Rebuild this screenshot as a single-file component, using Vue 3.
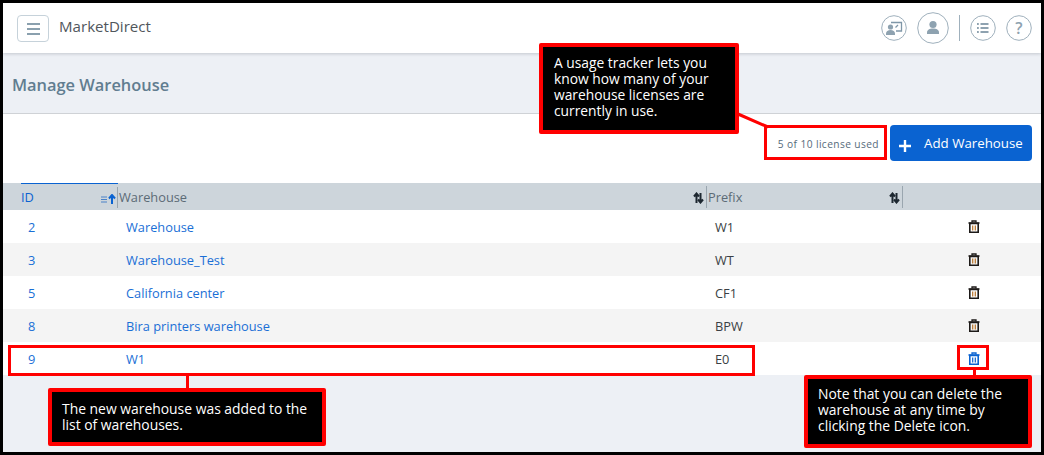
<script setup>
const rows = [
  { id: 2, name: 'Warehouse', prefix: 'W1' },
  { id: 3, name: 'Warehouse_Test', prefix: 'WT' },
  { id: 5, name: 'California center', prefix: 'CF1' },
  { id: 8, name: 'Bira printers warehouse', prefix: 'BPW' },
  { id: 9, name: 'W1', prefix: 'E0', active: true },
]
</script>

<template>
  <div class="page">
    <header class="topbar">
      <button class="menu" aria-label="Menu"><span></span><span></span><span></span></button>
      <div class="brand">MarketDirect</div>
      <div class="tools">
        <svg class="ic" width="26" height="26" viewBox="0 0 26 26">
          <circle cx="13" cy="13" r="12.300" fill="#fff" stroke="#9fb0bc" />
          <path d="M10 7.500h10.500v8.500H15" fill="none" stroke="#7f97a8" stroke-width="1.300" />
          <path d="M14.500 12.500l2.500-2.500" fill="none" stroke="#7f97a8" stroke-width="1.300" />
          <circle cx="9.500" cy="12" r="2.600" fill="#8ea2b0" />
          <path d="M5 20v-1.500c0-2.200 2-3.500 4.500-3.500s4.500 1.300 4.500 3.500V20z" fill="#8ea2b0" />
        </svg>
        <svg class="ic" width="32" height="32" viewBox="0 0 32 32">
          <circle cx="16" cy="16" r="15.300" fill="#fff" stroke="#9fb0bc" />
          <circle cx="16" cy="12.500" r="3.600" fill="#8ea2b0" />
          <path d="M10 22v-1.500c0-2.500 2.500-4 6-4s6 1.500 6 4V22z" fill="#8ea2b0" />
        </svg>
        <i class="sep"></i>
        <svg class="ic" width="26" height="26" viewBox="0 0 26 26">
          <circle cx="13" cy="13" r="12.300" fill="#fff" stroke="#9fb0bc" />
          <path d="M10.500 9h8M10.500 13h8M10.500 17h8" stroke="#8ea2b0" stroke-width="1.800" />
          <path d="M7 9h1.800M7 13h1.800M7 17h1.800" stroke="#8ea2b0" stroke-width="1.800" />
        </svg>
        <svg class="ic" width="26" height="26" viewBox="0 0 26 26">
          <circle cx="13" cy="13" r="12.300" fill="#fff" stroke="#9fb0bc" />
          <text x="13" y="18.500" text-anchor="middle" class="q">?</text>
        </svg>
      </div>
    </header>

    <section class="title">
      <h1>Manage Warehouse</h1>
    </section>

    <section class="toolbar">
      <span class="usage">5 of 10 license used</span>
      <button class="add">
        <svg width="14" height="14" viewBox="0 0 14 14"><path d="M7 1v12M1 7h12" stroke="#fff" stroke-width="2.400" /></svg>
        <span>Add Warehouse</span>
      </button>
    </section>

    <div class="table">
      <div class="row head">
        <div class="hcell sorted">
          <span>ID</span>
          <svg width="15" height="10" viewBox="0 0 15 10">
            <path d="M0 3h6M0 5.500h6M0 8h6" stroke="#4a82c8" stroke-width="1" />
            <path d="M11 10V2M8 4.500L11 1l3 3.500" fill="none" stroke="#0a63d1" stroke-width="2" />
          </svg>
        </div>
        <div class="hcell">
          <span>Warehouse</span>
          <svg width="11" height="12" viewBox="0 0 11 12">
            <path d="M3.500 11V2M1 4.500l2.500-3 2.500 3" fill="none" stroke="#1d2730" stroke-width="2" />
            <path d="M7.500 1v9M5 7.500l2.500 3 2.500-3" fill="none" stroke="#1d2730" stroke-width="2" />
          </svg>
        </div>
        <div class="hcell">
          <span>Prefix</span>
          <svg width="11" height="12" viewBox="0 0 11 12">
            <path d="M3.500 11V2M1 4.500l2.500-3 2.500 3" fill="none" stroke="#1d2730" stroke-width="2" />
            <path d="M7.500 1v9M5 7.500l2.500 3 2.500-3" fill="none" stroke="#1d2730" stroke-width="2" />
          </svg>
        </div>
        <div class="hcell last"></div>
      </div>
      <div v-for="r in rows" :key="r.id" class="row body">
        <div class="cell idc"><a>{{ r.id }}</a></div>
        <div class="cell namec"><a>{{ r.name }}</a></div>
        <div class="cell prefc">{{ r.prefix }}</div>
        <div class="cell actc" :class="{ on: r.active }">
          <svg width="12" height="13" viewBox="0 0 12 13">
            <path d="M0.500 3h11" stroke="currentColor" stroke-width="1.600" />
            <path d="M4 2.500V1h4v1.500" fill="none" stroke="currentColor" stroke-width="1.300" />
            <path d="M1.800 3.500h8.400V12.300H1.800z" fill="none" stroke="currentColor" stroke-width="1.600" />
            <path d="M4.700 5.500v5M7.300 5.500v5" stroke="#b8742a" stroke-width="1.200" class="bars" />
          </svg>
        </div>
      </div>
    </div>

    <div class="notes">
      <div class="callout c1">A usage tracker lets you know how many of your warehouse licenses are currently in use.</div>
      <div class="callout c2">The new warehouse was added to the list of warehouses.</div>
      <div class="callout c3">Note that you can delete the warehouse at any time by clicking the Delete icon.</div>
      <div class="hl h1"></div>
      <div class="hl h2"></div>
      <div class="hl h3"></div>
      <svg class="links" width="1044" height="455" viewBox="0 0 1044 455">
        <path d="M738 114L768 127M187.500 375V389M974.500 370V376" fill="none" stroke="#f00" stroke-width="3" />
      </svg>
    </div>
  </div>
</template>

<style scoped>
.page {
  position: relative;
  box-sizing: border-box;
  width: 1044px;
  height: 455px;
  border: 3px solid #000;
  background: #edf0f5;
  font-family: "Open Sans", "Noto Sans", sans-serif;
  overflow: hidden;
}
.topbar {
  height: 50px;
  box-sizing: border-box;
  display: flex;
  align-items: center;
  padding: 0 9px 0 14px;
  background: #fff;
  box-shadow: 0 1px 3px rgba(90, 100, 110, 0.28);
  position: relative;
}
.menu {
  width: 32px;
  height: 27px;
  margin-top: 1px;
  padding: 0;
  box-sizing: border-box;
  border: 1px solid #c6d2da;
  border-radius: 4px;
  background: #fff;
  display: flex;
  flex-direction: column;
  align-items: center;
  justify-content: center;
  gap: 3px;
}
.menu span {
  width: 13px;
  height: 2px;
  background: #8aa0ae;
}
.brand {
  margin-left: 10px;
  margin-top: -5px;
  font-size: 15.100px;
  color: #50565c;
}
.tools {
  margin-left: auto;
  display: flex;
  align-items: center;
  gap: 10px;
}
.ic {
  display: block;
}
.q {
  font-family: "Open Sans", sans-serif;
  font-size: 16px;
  fill: #8ea2b0;
  font-weight: 600;
}
.sep {
  width: 1px;
  height: 26px;
  background: #9fb0bc;
}
.title {
  height: 61px;
  box-sizing: border-box;
  display: flex;
  align-items: center;
  padding-left: 9px;
  padding-top: 3px;
  border-bottom: 1px solid #cfd2d6;
}
h1 {
  margin: 0;
  font-size: 16.400px;
  font-weight: 600;
  color: #617d90;
}
.toolbar {
  height: 69px;
  box-sizing: border-box;
  background: #fff;
  display: flex;
  align-items: flex-start;
  justify-content: flex-end;
  padding: 11px 9px 0 0;
}
.usage {
  font-size: 10.200px;
  letter-spacing: 0.4px;
  color: #566b7b;
  margin: 12px 11px 0 0;
}
.add {
  width: 142px;
  height: 36px;
  box-sizing: border-box;
  border: 0;
  border-radius: 4px;
  background: #0a63d1;
  color: #fff;
  font: 13.300px "Open Sans", sans-serif;
  display: flex;
  align-items: center;
  padding: 0 0 0 8px;
}
.add svg {
  margin: 5px 12px 0 0;
}
.add span {
  margin-top: -1px;
}
.row {
  display: grid;
  grid-template-columns: 115px 589px 196px 1fr;
}
.head {
  height: 27px;
  background: #cdd5db;
}
.hcell {
  display: flex;
  align-items: center;
  justify-content: space-between;
  box-sizing: border-box;
  padding: 0 3px 0 1px;
  font-size: 12.800px;
  color: #5c6b76;
  position: relative;
}
.hcell::after {
  content: "";
  position: absolute;
  right: 0;
  top: 3px;
  bottom: 2px;
  width: 1px;
  background: #9aa6af;
}
.hcell.last::after {
  display: none;
}
.sorted {
  margin-left: 18px;
  padding: 0 2px 0 0;
  color: #0a63d1;
  border-top: 1px solid #0a63d1;
}
.hcell svg {
  margin-top: 3px;
}
.body {
  height: 33px;
  background: #fff;
  font-size: 12.800px;
  align-items: center;
  color: #3a3f44;
}
.body:nth-child(odd) {
  background: #f4f4f4;
}
.cell a {
  color: #1a6fd6;
}
.idc {
  padding-left: 25px;
}
.namec {
  padding-left: 8px;
}
.prefc {
  padding-left: 8px;
}
.actc {
  color: #1d1a18;
  display: flex;
  justify-content: center;
  padding-left: 3px;
  padding-bottom: 1px;
}
.actc.on {
  color: #0a63d1;
}
.actc.on .bars {
  stroke: #0a63d1;
}
.notes {
  position: absolute;
  top: -3px;
  left: -3px;
  width: 1044px;
  height: 455px;
  pointer-events: none;
}
.links {
  position: absolute;
  inset: 0;
}
.callout {
  position: absolute;
  box-sizing: border-box;
  background: #000;
  color: #fff;
  border: 4px solid #f00;
  border-radius: 2px;
  font-size: 13.900px;
  line-height: 16px;
  padding: 6px 10px;
}
.c1 {
  left: 539px;
  top: 43px;
  width: 200px;
  height: 91px;
  padding-top: 8px;
  padding-left: 11px;
  font-size: 13.800px;
}
.c2 {
  left: 48px;
  top: 388px;
  width: 278px;
  height: 58px;
  padding-top: 9px;
}
.c3 {
  left: 804px;
  top: 375px;
  width: 228px;
  height: 73px;
  padding-top: 7px;
}
.hl {
  position: absolute;
  box-sizing: border-box;
  border: 3px solid #f00;
}
.h1 {
  left: 764px;
  top: 125px;
  width: 123px;
  height: 35px;
}
.h2 {
  left: 8px;
  top: 345px;
  width: 747px;
  height: 31px;
}
.h3 {
  left: 957px;
  top: 345px;
  width: 32px;
  height: 25px;
}
</style>

<style>
html, body { margin: 0; padding: 0; background: #000; }
</style>
